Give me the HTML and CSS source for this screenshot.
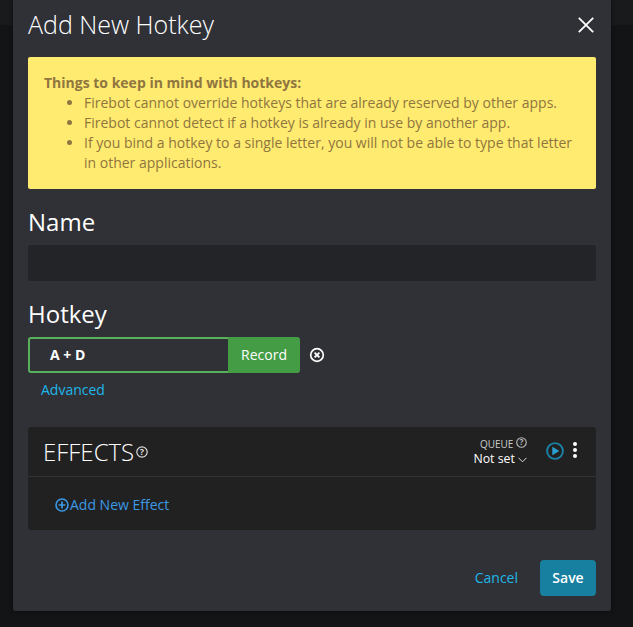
FILE: index.html
```html
<!DOCTYPE html>
<html lang="en">
<head>
    <meta charset="UTF-8">
    <title>Add New Hotkey</title>
    <link rel="stylesheet" href="styles.css">
</head>
<body>
    <div class="modal">
        <div class="modal-header">
            <h4 class="modal-title">Add New Hotkey</h4>
            <svg class="close" width="16" height="16" viewBox="0 0 16 16"><path d="M.8.800l14.400 14.400M15.200.800L.8 15.200" stroke="#fff" stroke-width="1.800" fill="none"/></svg>
        </div>
        <div class="modal-body">
            <div class="alert">
                <b>Things to keep in mind with hotkeys:</b>
                <ul>
                    <li>Firebot cannot override hotkeys that are already reserved by other apps.</li>
                    <li>Firebot cannot detect if a hotkey is already in use by another app.</li>
                    <li>If you bind a hotkey to a single letter, you will not be able to type that letter in other applications.</li>
                </ul>
            </div>

            <h3 class="field-title">Name</h3>
            <div class="name-input"></div>

            <h3 class="field-title">Hotkey</h3>
            <div class="hotkey-row">
                <div class="hotkey-group">
                    <div class="hotkey-value">A + D</div>
                    <div class="record-btn">Record</div>
                </div>
                <svg class="clear-icon" width="16" height="16" viewBox="0 0 16 16"><circle cx="8" cy="8" r="6.300" fill="none" stroke="#fff" stroke-width="1.700"/><path d="M5.600 5.600l4.800 4.800M10.400 5.600l-4.800 4.800" stroke="#fff" stroke-width="1.900" fill="none"/></svg>
            </div>
            <a class="advanced">Advanced</a>

            <div class="effects">
                <div class="effects-header">
                    <span class="effects-title">EFFECTS</span>
                    <svg class="help-icon" width="12" height="12" viewBox="0 0 12 12"><circle cx="6" cy="6" r="5.200" fill="none" stroke="#ddd" stroke-width="1.200"/><text x="6" y="9" text-anchor="middle" class="help-mark">?</text></svg>
                    <div class="effects-controls">
                        <div class="queue">
                            <div class="queue-label">QUEUE <svg width="11" height="11" viewBox="0 0 12 12"><circle cx="6" cy="6" r="5.200" fill="none" stroke="#bbb" stroke-width="1.200"/><text x="6" y="9" text-anchor="middle" class="help-mark queue-mark">?</text></svg></div>
                            <div class="queue-value">Not set <svg width="9" height="6" viewBox="0 0 9 6"><path d="M.5.800l4 4 4-4" stroke="#ddd" fill="none"/></svg></div>
                        </div>
                        <svg class="play-icon" width="18" height="18" viewBox="0 0 18 18"><circle cx="9" cy="9" r="7.900" fill="none" stroke="#1a83a8" stroke-width="1.900"/><path d="M6.300 4.800v8.400l7-4.200z" fill="#2aa1d3"/></svg>
                        <div class="dots"><i></i><i></i><i></i></div>
                    </div>
                </div>
                <div class="effects-body">
                    <a class="add-effect"><svg width="15" height="14" viewBox="0 0 15 14"><circle cx="7" cy="7" r="6" fill="none" stroke="#3b99e6" stroke-width="1.600"/><path d="M7 3.600v6.800M3.600 7h6.800" stroke="#3b99e6" stroke-width="1.700"/></svg>Add New Effect</a>
                </div>
            </div>
        </div>
        <div class="modal-footer">
            <a class="cancel">Cancel</a>
            <div class="save-btn">Save</div>
        </div>
    </div>
</body>
</html>
```

FILE: styles.css
```css
html, body {
    height: 100%;
}
body {
    margin: 0;
    overflow: hidden;
    font-family: 'Open Sans', 'Noto Sans', sans-serif;
    font-size: 14px;
    color: #fff;
    background: linear-gradient(#191a1c 0, #191a1c 25px, #131416 25px);
}
.modal {
    width: 598px;
    height: 611px;
    margin-left: 13px;
    background-color: #2f3137;
    border-radius: 0 0 3px 3px;
    box-shadow: 0 0 4px rgba(0, 0, 0, 0.6);
    display: flex;
    flex-direction: column;
}
.modal-header {
    height: 57px;
    padding: 0 15px;
    display: flex;
    align-items: center;
    justify-content: space-between;
    box-sizing: border-box;
}
.modal-title {
    margin: 0 0 9px;
    font-size: 25px;
    font-weight: 300;
    line-height: 34px;
}
.close {
    margin: 0 2px 7px 0;
}
.modal-body {
    padding: 0 15px;
    flex: 1;
}
.alert {
    height: 132px;
    box-sizing: border-box;
    padding: 16px;
    background-color: #ffeb6f;
    color: #8f7540;
    border-radius: 2px;
    line-height: 20px;
}
.alert ul {
    margin: 0;
    padding-left: 40px;
}
.field-title {
    margin: 17px 0 0;
    font-size: 24px;
    font-weight: 400;
    line-height: 32px;
}
.name-input {
    height: 36px;
    margin-top: 7px;
    background-color: #232427;
    border-radius: 3px;
}
.hotkey-row {
    display: flex;
    align-items: center;
    margin-top: 7px;
}
.hotkey-group {
    display: flex;
    width: 272px;
    height: 36px;
}
.hotkey-value {
    flex: 1;
    padding-left: 20px;
    border: 2px solid #58b05b;
    border-right: 0;
    border-radius: 3px 0 0 3px;
    font-weight: 700;
    line-height: 32px;
}
.record-btn {
    width: 72px;
    text-align: center;
    background-color: #449d44;
    border-radius: 0 3px 3px 0;
    line-height: 36px;
}
.clear-icon {
    margin-left: 9px;
}
.advanced {
    display: block;
    margin: 7px 0 0 13px;
    color: #1fb6e8;
    line-height: 20px;
}
.effects {
    margin-top: 27px;
    background-color: #212122;
    border-radius: 3px;
}
.effects-header {
    height: 49px;
    padding: 0 15px;
    border-bottom: 1px solid #333;
    display: flex;
    align-items: center;
}
.effects-title {
    font-size: 24px;
    font-weight: 300;
    color: #fff;
}
.help-icon {
    margin-left: 2px;
}
.help-mark {
    font-family: 'Open Sans', sans-serif;
    font-size: 9px;
    font-weight: 700;
    fill: #ddd;
}
.queue-mark {
    fill: #bbb;
}
.effects-controls {
    margin-left: auto;
    display: flex;
    align-items: center;
}
.queue {
    text-align: right;
    margin-right: 19px;
}
.queue-label {
    font-size: 10px;
    line-height: 14px;
    color: #ccc;
}
.queue-value {
    font-size: 12.300px;
    font-weight: 500;
    line-height: 16px;
}
.play-icon {
    margin: 0 9px 2px 0;
}
.dots {
    display: flex;
    flex-direction: column;
    gap: 2px;
    margin: 0 4px 4px 0;
}
.dots i {
    width: 4px;
    height: 4px;
    background-color: #fff;
    border-radius: 50%;
}
.effects-body {
    height: 53px;
    padding: 2px 0 0 27px;
    box-sizing: border-box;
    display: flex;
    align-items: center;
}
.add-effect {
    color: #3b99e6;
    display: flex;
    align-items: center;
}
.modal-footer {
    height: 81px;
    padding: 0 15px 15px;
    box-sizing: border-box;
    display: flex;
    justify-content: flex-end;
    align-items: flex-end;
}
.cancel {
    color: #1fb6e8;
    line-height: 36px;
    margin-right: 22px;
}
.save-btn {
    width: 56px;
    height: 36px;
    line-height: 36px;
    text-align: center;
    font-weight: 600;
    background-color: #177fa0;
    border-radius: 4px;
}
```
